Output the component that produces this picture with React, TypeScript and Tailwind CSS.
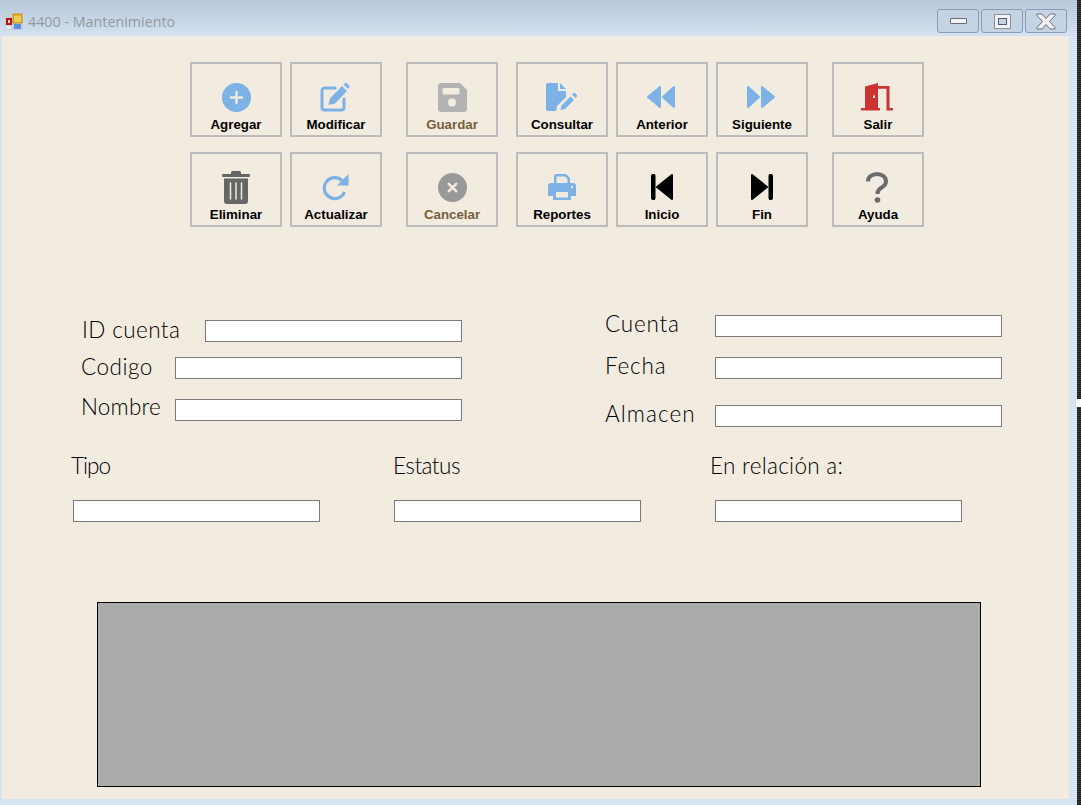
import React from 'react';

const BLUE = 'text-[#7cb2e6]';

const PlusCircleIcon = () => (
  <svg width="29" height="29" viewBox="0 0 29 29" className={BLUE}>
    <circle cx="14.500" cy="14.500" r="14.500" fill="currentColor" />
    <path d="M14.500 9v11M9 14.500h11" stroke="#f2ebe0" strokeWidth="2.400" strokeLinecap="round" />
  </svg>
);

const XCircleIcon = () => (
  <svg width="29" height="29" viewBox="0 0 29 29" className="text-[#999999]">
    <circle cx="14.500" cy="14.500" r="14.500" fill="currentColor" />
    <path d="M10.800 10.800l7.400 7.400M18.200 10.800l-7.400 7.400" stroke="#f2ebe0" strokeWidth="2.600" strokeLinecap="round" />
  </svg>
);

const SaveIcon = () => (
  <svg width="29" height="29" viewBox="0 0 29 29" className="text-[#b3b3b3]" fill="currentColor">
    <path d="M3 0h19l7 7v19a3 3 0 0 1-3 3H3a3 3 0 0 1-3-3V3a3 3 0 0 1 3-3z" />
    <rect x="4.500" y="5" width="17" height="6.500" rx="1" fill="#f2ebe0" />
    <circle cx="14" cy="19.500" r="4" fill="#f2ebe0" />
  </svg>
);

const EditIcon = () => (
  <svg width="30" height="30" viewBox="0 0 30 30" className={`${BLUE} -ml-[2px]`} fill="none">
    <path d="M24 17v8.500a2.500 2.500 0 0 1-2.500 2.500H4.500A2.500 2.500 0 0 1 2 25.500V8.500A2.500 2.500 0 0 1 4.500 6H15" stroke="currentColor" strokeWidth="3" strokeLinecap="round" />
    <path d="M22 4l5 5-12 12.500-6.500 1.500 1.500-6.500z" fill="currentColor" />
    <path d="M23.500 2.500l1.300-1.300a1.600 1.600 0 0 1 2.200 0l2 2a1.600 1.600 0 0 1 0 2.200l-1.300 1.300z" fill="currentColor" />
  </svg>
);

const TrashIcon = () => (
  <svg width="28" height="33" viewBox="0 0 28 33" className="text-[#666666]" fill="currentColor">
    <path d="M9 1.500a1.500 1.500 0 0 1 1.500-1.500h7A1.500 1.500 0 0 1 19 1.500V3h8a1 1 0 0 1 1 1v1a1 1 0 0 1-1 1H1a1 1 0 0 1-1-1V4a1 1 0 0 1 1-1h8z" />
    <path d="M2 7.500h24V30a3 3 0 0 1-3 3H5a3 3 0 0 1-3-3z" />
    <path d="M8.500 12v16M14 12v16M19.500 12v16" stroke="#f2ebe0" strokeWidth="1.500" strokeLinecap="round" />
  </svg>
);

const RedoIcon = () => (
  <svg width="28" height="28" viewBox="0 0 28 28" className={BLUE} fill="none">
    <path d="M22.500 19A10.500 10.500 0 1 1 20 7.500" stroke="currentColor" strokeWidth="3.200" />
    <polygon points="26.500,1 26.500,12.500 15,12.500" fill="currentColor" />
  </svg>
);

const PrinterIcon = () => (
  <svg width="28" height="28" viewBox="0 0 28 28" className={BLUE} fill="currentColor">
    <path d="M6 10V3a2 2 0 0 1 2-2h10l4 4v5h-2.500V6l-2.500-2.500H8.500V10z" />
    <path fillRule="evenodd" d="M3 10h22a3 3 0 0 1 3 3v10h-5v4H5v-4H0V13a3 3 0 0 1 3-3zM8 19h12v5.500H8z" />
    <circle cx="24" cy="14" r="1.200" fill="#f2ebe0" />
  </svg>
);

const StepBackIcon = () => (
  <svg width="22" height="26" viewBox="0 0 22 26" fill="black" stroke="black" strokeLinejoin="round">
    <rect x="0.500" y="0.500" width="3.500" height="25" rx="1" />
    <polygon points="21,1 21,25 6,13" strokeWidth="2" />
  </svg>
);

const StepForwardIcon = () => (
  <svg width="22" height="26" viewBox="0 0 22 26" fill="black" stroke="black" strokeLinejoin="round">
    <polygon points="1,1 1,25 16,13" strokeWidth="2" />
    <rect x="18" y="0.500" width="3.500" height="25" rx="1" />
  </svg>
);

const QuestionIcon = () => (
  <svg width="22" height="31" viewBox="0 0 22 31" className="text-[#6b6b6b] -ml-[2px]" fill="none">
    <path d="M2 9.500C2 5 6 2 11 2s9 3 9 7.500c0 3.500-2.500 5-5 6.500-2.500 1.400-3.500 2.500-3.500 6" stroke="currentColor" strokeWidth="4" />
    <circle cx="11.500" cy="28" r="2.800" fill="currentColor" />
  </svg>
);

const FileEditIcon = () => (
  <svg width="32" height="28" viewBox="0 0 32 28" className={BLUE} fill="currentColor">
    <path d="M2 0h10v8h8v6l-9 9-1 5H2a2 2 0 0 1-2-2V2a2 2 0 0 1 2-2z" />
    <path d="M14 0l6 6h-6z" />
    <path d="M24.500 13.500l3.500 3.500-9 9-4.500 1 1-4.500z" />
    <path d="M26 11.500l1.200-1.200a1.500 1.500 0 0 1 2 0l1.500 1.500a1.500 1.500 0 0 1 0 2l-1.200 1.200z" />
  </svg>
);

const RewindIcon = () => (
  <svg width="30" height="24" viewBox="0 0 30 24" className={`${BLUE} -ml-[2px]`} fill="currentColor" stroke="currentColor" strokeWidth="2" strokeLinejoin="round">
    <polygon points="14,2 14,22 2,12" />
    <polygon points="28,2 28,22 17,12" />
  </svg>
);

const ForwardIcon = () => (
  <svg width="30" height="24" viewBox="0 0 30 24" className={`${BLUE} -ml-[2px]`} fill="currentColor" stroke="currentColor" strokeWidth="2" strokeLinejoin="round">
    <polygon points="2,2 2,22 13,12" />
    <polygon points="16,2 16,22 28,12" />
  </svg>
);

const DoorIcon = () => (
  <svg width="32" height="28" viewBox="0 0 32 28" className="text-[#cc3333] -ml-[2px]" fill="currentColor">
    <path fillRule="evenodd" d="M4 3.500L17 0v26H4zM12 12.500h2v2.500h-2z" />
    <path d="M17 3h11.500v22H32v2.500H25.500V5.800H17z" />
    <rect x="0" y="25" width="19" height="2.500" />
  </svg>
);

const AppIcon = () => (
  <svg width="18" height="18" viewBox="0 0 18 18">
    <rect width="18" height="18" fill="#c8ced6" />
    <rect x="1" y="6" width="6" height="7" fill="#b01818" />
    <rect x="3" y="8" width="2" height="3" fill="#f4d0c0" />
    <rect x="1" y="14" width="5" height="3" fill="#e4e8ec" />
    <rect x="8" y="2" width="9" height="9" fill="#e8b010" stroke="#a07808" strokeWidth="0.6" />
    <rect x="9" y="4" width="7" height="6" fill="#f4cc50" />
    <rect x="9" y="12" width="7" height="5" fill="#5a90e0" />
  </svg>
);

const CloseGlyph = () => (
  <svg width="20" height="17" viewBox="0 0 20 17">
    <path d="M1 1h5l4 4.500L14 1h5v1.500L13.500 8.500 19 14.500V16h-5l-4-4.500L6 16H1v-1.500L6.500 8.500 1 2.500z" fill="#f2f2f2" stroke="#6a7078" strokeWidth="1" />
  </svg>
);

const WindowButton = ({ children }: { children: React.ReactNode }) => (
  <div className="w-[42px] h-[24px] rounded-[3px] border border-[#8a9ab8] bg-[#c5d4e5] flex items-center justify-center">
    {children}
  </div>
);

type ToolItem = { label: string; icon: React.ReactNode; muted?: boolean };

const ToolButton = ({ label, icon, muted }: ToolItem) => (
  <button className="w-[92px] h-[75px] border-2 border-[#bcbcbc] flex flex-col items-center">
    <div className="mt-[18px] h-[30px] w-full flex items-center justify-center">{icon}</div>
    <span className={`mt-[6px] text-[13.300px] leading-[14px] font-bold font-['Liberation_Sans',sans-serif] ${muted ? 'text-[#75603a]' : 'text-black'}`}>
      {label}
    </span>
  </button>
);

const columns: { gap: string; items: ToolItem[] }[] = [
  { gap: 'ml-0', items: [
    { label: 'Agregar', icon: <PlusCircleIcon /> },
    { label: 'Eliminar', icon: <TrashIcon /> },
  ] },
  { gap: 'ml-[8px]', items: [
    { label: 'Modificar', icon: <EditIcon /> },
    { label: 'Actualizar', icon: <RedoIcon /> },
  ] },
  { gap: 'ml-[24px]', items: [
    { label: 'Guardar', muted: true, icon: <SaveIcon /> },
    { label: 'Cancelar', muted: true, icon: <XCircleIcon /> },
  ] },
  { gap: 'ml-[18px]', items: [
    { label: 'Consultar', icon: <FileEditIcon /> },
    { label: 'Reportes', icon: <PrinterIcon /> },
  ] },
  { gap: 'ml-[8px]', items: [
    { label: 'Anterior', icon: <RewindIcon /> },
    { label: 'Inicio', icon: <StepBackIcon /> },
  ] },
  { gap: 'ml-[8px]', items: [
    { label: 'Siguiente', icon: <ForwardIcon /> },
    { label: 'Fin', icon: <StepForwardIcon /> },
  ] },
  { gap: 'ml-[24px]', items: [
    { label: 'Salir', icon: <DoorIcon /> },
    { label: 'Ayuda', icon: <QuestionIcon /> },
  ] },
];

const labelClass = "text-[22.500px] leading-[24px] font-light text-black font-['Lato',sans-serif] whitespace-nowrap";
const inputClass = 'h-[22px] border border-[#7a7a7a] bg-white outline-none';

export default function App() {
  return (
    <div className="relative w-[1081px] h-[805px] overflow-hidden bg-[#d6e4f2]">
      {/* Title bar */}
      <div className="h-[36px] bg-gradient-to-b from-[#b7c8d8] to-[#d4e2f1] flex items-start">
        <div className="ml-[5px] mt-[12px]"><AppIcon /></div>
        <span className="ml-[5px] mt-[12px] text-[14.300px] leading-[20px] text-[#93989e] font-['Open_Sans',sans-serif]">
          4400 - Mantenimiento
        </span>
        <div className="ml-auto mr-[14px] mt-[9px] flex gap-[2px]">
          <WindowButton><div className="w-[17px] h-[6px] bg-[#f4f4f4] border border-[#666c78] rounded-[1px]" /></WindowButton>
          <WindowButton>
            <div className="w-[17px] h-[15px] bg-[#f4f4f4] border border-[#8a8f98] flex items-center justify-center">
              <div className="w-[9px] h-[7px] bg-[#c5d4e5] border border-[#555b66]" />
            </div>
          </WindowButton>
          <WindowButton><CloseGlyph /></WindowButton>
        </div>
      </div>

      {/* Client area */}
      <div className="ml-[2px] w-[1067px] h-[763px] bg-[#f2ebe0] flex flex-col">
        <div className="ml-[188px] mt-[26px] flex">
          {columns.map((col) => (
            <div key={col.items[0].label} className={`${col.gap} flex flex-col gap-[15px]`}>
              {col.items.map((item) => <ToolButton key={item.label} {...item} />)}
            </div>
          ))}
        </div>

        <div className="mt-[88px] flex items-start">
          {/* Left fields */}
          <div className="ml-[79px] w-[381px] mt-[5px] flex flex-col">
            <div className="flex">
              <span className={`${labelClass} tracking-[0.4px] ml-[1px] -mt-[2px]`}>ID cuenta</span>
              <input className={`${inputClass} w-[257px] ml-auto`} />
            </div>
            <div className="flex mt-[15px]">
              <span className={`${labelClass} tracking-[0.5px] -mt-[2px]`}>Codigo</span>
              <input className={`${inputClass} w-[287px] ml-auto`} />
            </div>
            <div className="flex mt-[20px]">
              <span className={`${labelClass} tracking-[0.2px] -mt-[4px]`}>Nombre</span>
              <input className={`${inputClass} w-[287px] ml-auto`} />
            </div>
          </div>
          {/* Right fields */}
          <div className="ml-[143px] w-[397px] flex flex-col">
            <div className="flex">
              <span className={`${labelClass} tracking-[0.8px] -mt-[3px]`}>Cuenta</span>
              <input className={`${inputClass} w-[287px] ml-auto`} />
            </div>
            <div className="flex mt-[20px]">
              <span className={`${labelClass} tracking-[0.8px] -mt-[3px]`}>Fecha</span>
              <input className={`${inputClass} w-[287px] ml-auto`} />
            </div>
            <div className="flex mt-[26px]">
              <span className={`${labelClass} tracking-[1.100px] -mt-[3px]`}>Almacen</span>
              <input className={`${inputClass} w-[287px] ml-auto`} />
            </div>
          </div>
        </div>

        {/* Tipo / Estatus / En relacion */}
        <div className="mt-[27px] flex">
          <div className="ml-[69px] w-[322px]"><span className={`${labelClass} tracking-[-1px]`}>Tipo</span></div>
          <div className="w-[317px]"><span className={`${labelClass} tracking-[-0.5px]`}>Estatus</span></div>
          <div><span className={`${labelClass} tracking-[0.3px]`}>En relación a:</span></div>
        </div>
        <div className="mt-[20px] flex">
          <input className={`${inputClass} ml-[71px] w-[247px]`} />
          <input className={`${inputClass} ml-[74px] w-[247px]`} />
          <input className={`${inputClass} ml-[74px] w-[247px]`} />
        </div>

        <div className="ml-[95px] mt-[80px] w-[884px] h-[185px] bg-[#ababab] border border-black" />
      </div>

      {/* Desktop edge behind the window */}
      <div className="absolute top-0 right-0 w-[4px] h-full bg-[repeating-linear-gradient(to_bottom,#1c1c1c_0px,#1c1c1c_1px,#3a3a3a_1px,#3a3a3a_2px)]" />
      <div className="absolute top-[399px] right-0 w-[5px] h-[8px] bg-white rounded-l-[1px]" />
    </div>
  );
}
